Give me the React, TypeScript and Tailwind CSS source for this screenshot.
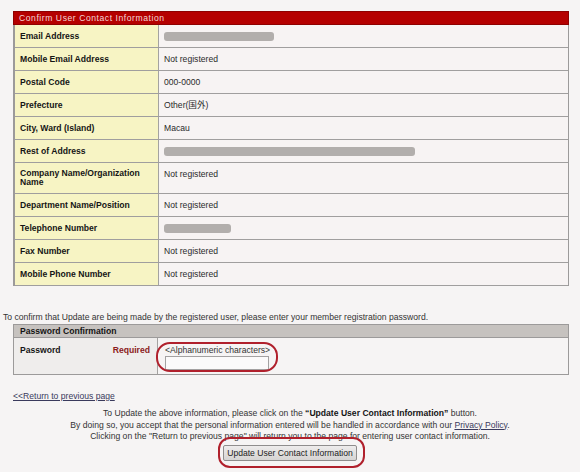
import React from "react";

type Row = { label: string; value?: string; bar?: number; tall?: boolean };

const rows: Row[] = [
  { label: "Email Address", bar: 110 },
  { label: "Mobile Email Address", value: "Not registered" },
  { label: "Postal Code", value: "000-0000" },
  { label: "Prefecture", value: "Other(国外)" },
  { label: "City, Ward (Island)", value: "Macau" },
  { label: "Rest of Address", bar: 251 },
  { label: "Company Name/Organization Name", value: "Not registered", tall: true },
  { label: "Department Name/Position", value: "Not registered" },
  { label: "Telephone Number", bar: 67 },
  { label: "Fax Number", value: "Not registered" },
  { label: "Mobile Phone Number", value: "Not registered" },
];

const font = { fontFamily: '"Liberation Sans", Arial, "Noto Sans CJK JP", sans-serif' };

export default function App() {
  return (
    <div
      className="relative w-[580px] h-[472px] overflow-hidden bg-[#f6f4f4] text-[8.6px] leading-[10px] text-[#2a2a2a]"
      style={font}
    >
      <div className="pt-[11px] pl-[13px]">
        <div className="w-[556px]">
          <div className="h-[14px] bg-[#b50000] border border-[#8e0000] pl-[5px] leading-[12px] tracking-[0.55px] text-[#f3d6d6]">
            Confirm User Contact Information
          </div>
          <div className="border-l-2 border-r border-[#9c9a9a]">
            {rows.map((r) => (
              <div key={r.label} className="flex border-b border-[#a09e9e]">
                <div
                  className={`w-[144px] shrink-0 bg-[#f7f4c4] border-r border-[#a4a2a0] pl-[5px] pr-[4px] py-[6px] font-bold text-[#151515] ${
                    r.tall ? "leading-[9px]" : ""
                  }`}
                >
                  {r.tall ? (
                    <>
                      Company Name/Organization
                      <br />
                      Name
                    </>
                  ) : (
                    r.label
                  )}
                </div>
                <div className="flex-1 pl-[5px] py-[6px] bg-[#f7f3f3]">
                  {r.bar ? (
                    <div
                      className="h-[9px] mt-[1px] rounded-[3px] bg-[#b2aeac] blur-[0.5px]"
                      style={{ width: r.bar }}
                    />
                  ) : (
                    r.value
                  )}
                </div>
              </div>
            ))}
          </div>
        </div>
      </div>

      <div className="mt-[26px] pl-[3px] text-[#333]">
        To confirm that Update are being made by the registered user, please enter your member registration password.
      </div>

      <div className="ml-[13px] mt-[2px] w-[556px] border border-[#9c9a9a]">
        <div className="h-[13px] bg-[#c6c2bf] border-b border-[#9c9a9a] pl-[6px] leading-[12px] font-bold text-[#151515]">
          Password Confirmation
        </div>
        <div className="flex h-[36px]">
          <div className="w-[144px] shrink-0 flex justify-between bg-[#efedec] border-r border-[#a4a2a0] pl-[6px] pr-[7px] pt-[7px] font-bold">
            <span className="text-[#151515]">Password</span>
            <span className="text-[#8b1b1b]">Required</span>
          </div>
          <div className="flex-1 pl-[7px] pt-[7px] text-[#333]">
            <div>&lt;Alphanumeric characters&gt;</div>
            <div className="mt-[1px] w-[104px] h-[14px] border border-[#a3a1a1] bg-[#fbfafa]" />
          </div>
        </div>
      </div>

      <div className="mt-[16px] pl-[13px]">
        <span className="underline text-[#3a3a5c]">&lt;&lt;Return to previous page</span>
      </div>

      <div className="mt-[7px] text-center leading-[11.6px] text-[#333]">
        <div>
          To Update the above information, please click on the{" "}
          <b className="text-[#151515]">“Update User Contact Information”</b> button.
        </div>
        <div>
          By doing so, you accept that the personal information entered will be handled in accordance with our{" "}
          <span className="underline text-[#3a3a5c]">Privacy Policy</span>.
        </div>
        <div>
          Clicking on the "Return to previous page" will return you to the page for entering user contact information.
        </div>
      </div>

      <div className="mt-[2px] flex justify-center">
        <button className="h-[16px] w-[134px] rounded-[2px] border border-[#8f8d8d] bg-gradient-to-b from-[#eeecec] to-[#d6d4d3] text-[8.6px] leading-[14px] text-[#222]">
          Update User Contact Information
        </button>
      </div>

      {/* hand-drawn red rings */}
      <div className="absolute left-[156px] top-[342px] w-[122px] h-[30px] rounded-[14px] border-2 border-[#b0202c]" />
      <div className="absolute left-[218px] top-[437px] w-[147px] h-[31px] rounded-[12px] border-2 border-[#b0202c]" />
    </div>
  );
}
